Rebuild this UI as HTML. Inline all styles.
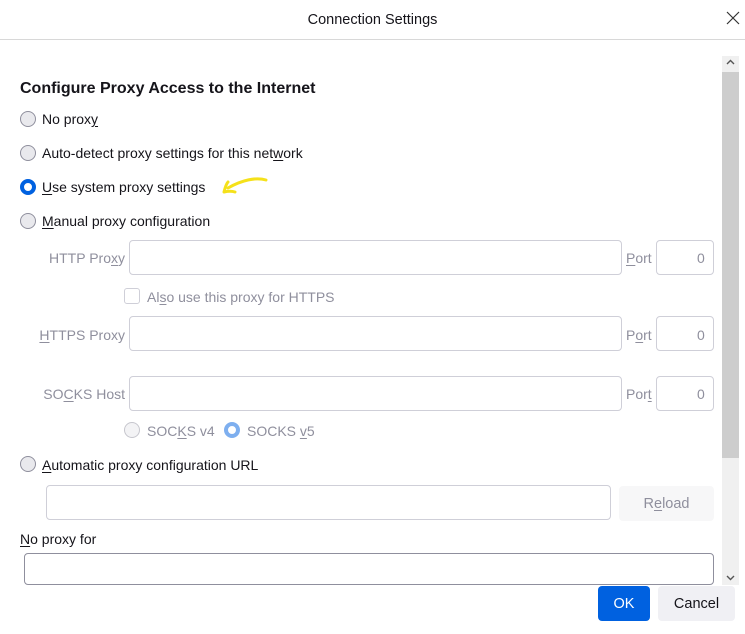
<!DOCTYPE html>
<html><head><style>
*{box-sizing:border-box;margin:0;padding:0}
body{width:745px;height:634px;background:#fff;font-family:"Liberation Sans",sans-serif;font-size:14px;color:#15141a;position:relative;overflow:hidden}
.a{position:absolute;white-space:nowrap}
.t{margin-top:1px}
.title{top:12px;left:0;width:745px;text-align:center;font-size:14.5px}
.hr{top:39px;left:0;width:745px;height:1px;background:#d8d8d8}
.r{position:absolute;width:16px;height:16px;border-radius:50%;border:1px solid #8f8f9d;background:#e9e9ed}
.r.on{border:4px solid #0061e0;background:#fff}
.r.dis{opacity:.5}
.g{color:#8f8f9d}
.lab{text-align:right;width:110px}
.in{position:absolute;border:1px solid #cfcfd8;border-radius:4px;background:#fff}
.btn{position:absolute;border-radius:4px;text-align:center;line-height:33px;padding-top:2px;height:35px;font-size:14.5px}
u{text-decoration:underline;text-underline-offset:2px}
</style></head><body>
<div class="a title">Connection Settings</div>
<svg class="a" style="left:726px;top:11px" width="14" height="14"><path d="M1 1L13 13M13 1L1 13" stroke="#333" stroke-width="1.2"/></svg>
<div class="a hr"></div>

<div class="a" style="left:722px;top:56px;width:17px;height:529px;background:#f0f0f0"></div>
<div class="a" style="left:722px;top:72px;width:17px;height:386px;background:#cdcdcd"></div>
<svg class="a" style="left:726px;top:59px" width="9" height="7"><path d="M1 5L4.5 1.5L8 5" stroke="#555" stroke-width="1.4" fill="none"/></svg>
<svg class="a" style="left:726px;top:574px" width="9" height="7"><path d="M1 2L4.5 5.5L8 2" stroke="#555" stroke-width="1.4" fill="none"/></svg>

<div class="a" style="left:20px;top:80px;font-size:16px;font-weight:600">Configure Proxy Access to the Internet</div>

<div class="r" style="left:20px;top:111px"></div><div class="a t" style="left:42px;top:110px">No prox<u>y</u></div>
<div class="r" style="left:20px;top:145px"></div><div class="a t" style="left:42px;top:144px">Auto-detect proxy settings for this net<u>w</u>ork</div>
<div class="r on" style="left:20px;top:179px"></div><div class="a t" style="left:42px;top:178px"><u>U</u>se system proxy settings</div>
<svg class="a" style="left:220px;top:174px" width="50" height="22"><path d="M46 6C36 3 22 6 8 14M4 18C5 14 6 10 8 8M4 18C8 17 12 17 15 18" stroke="#f5e11a" stroke-width="3" fill="none" stroke-linecap="round"/></svg>
<div class="r" style="left:20px;top:213px"></div><div class="a t" style="left:42px;top:212px"><u>M</u>anual proxy configuration</div>

<div class="a g lab t" style="left:15px;top:249px">HTTP Pro<u>x</u>y</div>
<div class="in" style="left:129px;top:240px;width:493px;height:35px"></div>
<div class="a g t" style="left:626px;top:249px"><u>P</u>ort</div>
<div class="in" style="left:656px;top:240px;width:58px;height:35px"></div><div class="a g t" style="left:697px;top:249px">0</div>

<div class="a" style="left:124px;top:288px;width:16px;height:16px;border:1px solid #cfcfd8;border-radius:3px"></div>
<div class="a g t" style="left:147px;top:288px">Al<u>s</u>o use this proxy for HTTPS</div>

<div class="a g lab t" style="left:15px;top:326px"><u>H</u>TTPS Proxy</div>
<div class="in" style="left:129px;top:316px;width:493px;height:35px"></div>
<div class="a g t" style="left:626px;top:326px">P<u>o</u>rt</div>
<div class="in" style="left:656px;top:316px;width:58px;height:35px"></div><div class="a g t" style="left:697px;top:326px">0</div>

<div class="a g lab t" style="left:15px;top:385px">SO<u>C</u>KS Host</div>
<div class="in" style="left:129px;top:376px;width:493px;height:35px"></div>
<div class="a g t" style="left:626px;top:385px">Por<u>t</u></div>
<div class="in" style="left:656px;top:376px;width:58px;height:35px"></div><div class="a g t" style="left:697px;top:385px">0</div>

<div class="r dis" style="left:124px;top:422px"></div><div class="a g t" style="left:147px;top:422px">SOC<u>K</u>S v4</div>
<div class="r on dis" style="left:224px;top:422px"></div><div class="a g t" style="left:247px;top:422px">SOCKS <u>v</u>5</div>

<div class="r" style="left:20px;top:456px"></div><div class="a t" style="left:42px;top:456px"><u>A</u>utomatic proxy configuration URL</div>
<div class="in" style="left:46px;top:485px;width:565px;height:35px"></div>
<div class="btn g" style="left:619px;top:486px;width:95px;background:#f7f7f8">R<u>e</u>load</div>

<div class="a t" style="left:20px;top:530px"><u>N</u>o proxy for</div>
<div class="in" style="left:24px;top:553px;width:690px;height:32px;border-color:#8f8f9d"></div>

<div class="btn" style="left:598px;top:586px;width:52px;background:#0061e0;color:#fff">OK</div>
<div class="btn" style="left:658px;top:586px;width:77px;background:#f0f0f4">Cancel</div>
</body></html>
